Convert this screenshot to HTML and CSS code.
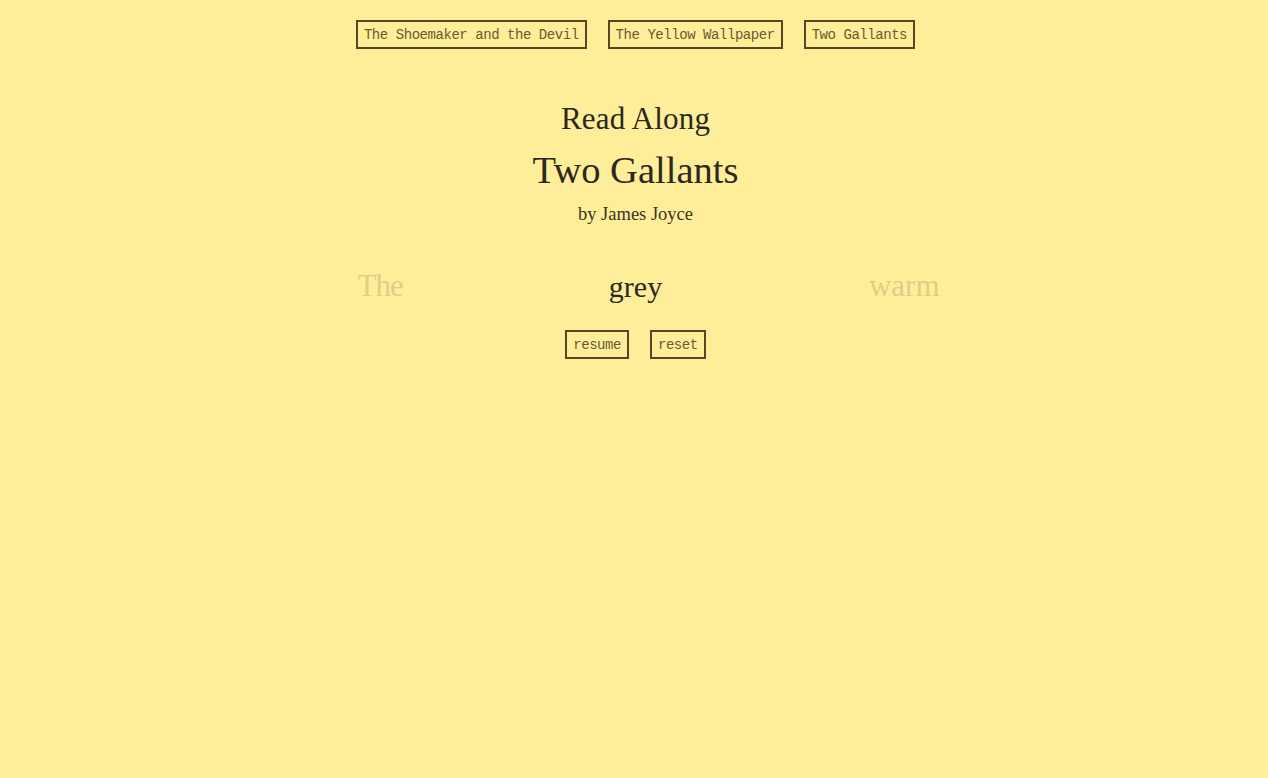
FILE: index.html
```html
<!DOCTYPE html>
<html>
<head>
<meta charset="utf-8">
<link rel="stylesheet" href="styles.css">
</head>
<body>
<nav class="stories">
  <button class="btn">The Shoemaker and the Devil</button>
  <button class="btn">The Yellow Wallpaper</button>
  <button class="btn">Two Gallants</button>
</nav>
<header class="head">
  <h2 class="kicker">Read Along</h2>
  <h1 class="title">Two Gallants</h1>
  <p class="author">by James Joyce</p>
</header>
<section class="words">
  <span class="word prev">The</span>
  <span class="word current">grey</span>
  <span class="word next">warm</span>
</section>
<div class="controls">
  <button class="btn">resume</button>
  <button class="btn">reset</button>
</div>
</body>
</html>
```

FILE: styles.css
```css
html, body {
  margin: 0;
  padding: 0;
  background: #ffee99;
}
body {
  font-family: "Liberation Serif", "Times New Roman", serif;
  color: #2b281c;
  padding-top: 20px;
  padding-left: 3px;
}
.stories, .controls {
  display: flex;
  justify-content: center;
  gap: 21px;
}
.btn {
  font-family: "Liberation Mono", "Courier New", monospace;
  font-size: 14px;
  letter-spacing: -0.45px;
  line-height: 27px;
  height: 29px;
  padding: 0 6px 0 6px;
  margin: 0;
  background: transparent;
  color: #6a5b30;
  border: 2px solid #584822;
  border-radius: 0;
}
.head {
  text-align: center;
  margin-top: 52px;
}
.kicker {
  font-weight: normal;
  font-size: 31px;
  line-height: 36px;
  margin: 0;
  letter-spacing: 0.2px;
}
.title {
  font-weight: normal;
  font-size: 38.5px;
  line-height: 48px;
  margin: 9px 0 0 0;
}
.author {
  font-size: 18.5px;
  line-height: 24px;
  margin: 8px 0 0 0;
  color: #3a3422;
}
.words {
  width: 608px;
  margin: 38px auto 0 auto;
  display: grid;
  grid-template-columns: 1fr auto 1fr;
  align-items: start;
  height: 52px;
}
.word {
  font-size: 31px;
  line-height: 40px;
}
.prev {
  color: #dccf88;
  padding-left: 26px;
  letter-spacing: -1px;
  margin-top: 2px;
}
.current {
  font-size: 30px;
  color: #2b281c;
  margin-top: 3px;
}
.next {
  color: #dccf88;
  text-align: right;
  margin-top: 2px;
}
.controls {
  margin-top: 14px;
}
```
